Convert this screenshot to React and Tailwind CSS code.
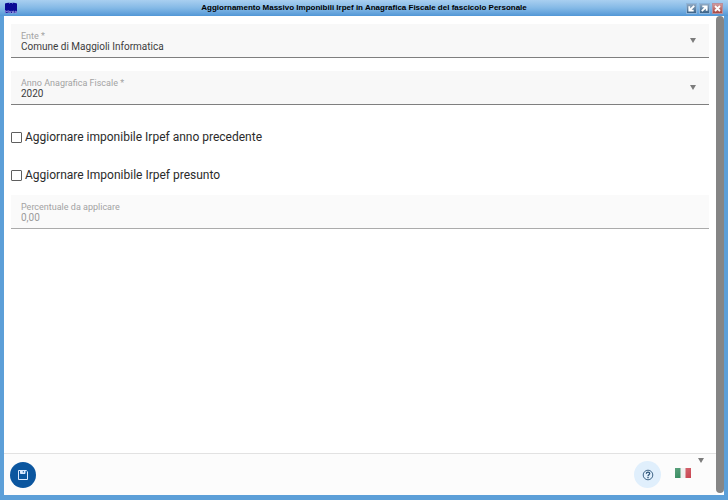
import React from "react";

function WindowButton({ label, close, children }) {
  return (
    <button
      type="button"
      aria-label={label}
      className={`flex h-[11px] w-[11px] items-center justify-center border ${
        close
          ? "border-[#b98f9c] bg-linear-to-b from-[#d09a9c] to-[#a84842]"
          : "border-[#8db4da] bg-linear-to-b from-[#8fa9c3] to-[#3c6488]"
      }`}
    >
      <svg viewBox="0 0 9 9" className="h-[9px] w-[9px]" fill="none" stroke="#fff" strokeWidth="1.8">
        {children}
      </svg>
    </button>
  );
}

function TitleBar() {
  return (
    <header className="flex h-4 items-center bg-linear-to-b from-[#a9cff0] via-[#84b9e6] to-[#5297d6] px-[5px]">
      <div className="flex flex-1">
        <svg viewBox="0 0 12 12" className="h-3 w-3" aria-hidden="true">
          <path d="M0 1.5Q3 .2 6 1Q9 .2 12 1.5V11H0z" fill="#0a0a94" />
          <path d="M4 1.5h1M7 1.5h1" stroke="#6a6ad8" strokeWidth=".7" />
          <path d="M.7 11V8.5l1.2 1.4 1.2-1.4V11M4.2 11V9.3h1.2V11M6.3 9.3h1.2v2H6.3M8.6 8.7V11M10 9.3h1.4V11H10z" fill="none" stroke="#a3a3e8" strokeWidth=".8" />
        </svg>
      </div>
      <h1 className="whitespace-nowrap font-['Liberation_Sans',Arial,sans-serif] text-[8px] font-bold leading-4 text-black">
        Aggiornamento Massivo Imponibili Irpef in Anagrafica Fiscale del fascicolo Personale
      </h1>
      <div className="flex flex-1 justify-end gap-[2px]">
        <WindowButton label="Riduci">
          <path d="M7.2 1.8 3 6M2.3 2.3v4.4h4.4" />
        </WindowButton>
        <WindowButton label="Ingrandisci">
          <path d="M1.8 7.2 6 3M2.3 2.3h4.4v4.4" />
        </WindowButton>
        <WindowButton label="Chiudi" close>
          <path d="m2 2 5 5m0-5L2 7" />
        </WindowButton>
      </div>
    </header>
  );
}

function Caret() {
  return (
    <svg viewBox="0 0 6 5" className="h-[5px] w-[6px] shrink-0" aria-hidden="true">
      <path d="M0 0h6L3 5z" fill="#7c7c7c" />
    </svg>
  );
}

function SelectField({ id, label, value }) {
  return (
    <div className="grid h-[34px] grid-cols-1 border-b border-[#7f7f7f] bg-[#f8f8f8]">
      <div className="col-start-1 row-start-1 flex flex-col px-[10px] pt-[7px]">
        <label htmlFor={id} className="text-[9px] leading-[10px] text-[#a3a3a3]">
          {label}
        </label>
        <select id={id} defaultValue={value} className="w-full appearance-none bg-transparent text-[10px] leading-3 text-[#3c3c3c] outline-none">
          <option>{value}</option>
        </select>
      </div>
      <div className="pointer-events-none col-start-1 row-start-1 flex items-center justify-end pr-[13px]">
        <Caret />
      </div>
    </div>
  );
}

function CheckRow({ label }) {
  return (
    <label className="flex h-[38px] items-center gap-[3px] text-[12px] leading-4 text-[#2b2b2b]">
      <input type="checkbox" className="h-[11px] w-[11px] shrink-0 appearance-none rounded-[1px] border border-[#5f5f5f] bg-white checked:bg-[#0b57a0]" />
      {label}
    </label>
  );
}

export default function App() {
  return (
    <div className="flex min-h-screen flex-col bg-[#5c9fd8] font-[Roboto,sans-serif]">
      <TitleBar />
      <div className="mr-1 mb-[5px] ml-1 flex flex-1 bg-white">
        <div className="flex min-w-0 flex-1 flex-col">
          <main className="flex flex-1 flex-col px-[7px] pt-2">
            <div className="flex flex-col gap-[13px]">
              <SelectField id="ente" label="Ente *" value="Comune di Maggioli Informatica" />
              <SelectField id="anno" label="Anno Anagrafica Fiscale *" value="2020" />
            </div>
            <div className="pt-[13px]">
              <CheckRow label="Aggiornare imponibile Irpef anno precedente" />
              <CheckRow label="Aggiornare Imponibile Irpef presunto" />
            </div>
            <div className="mt-px flex h-[34px] flex-col border-b border-[#ababab] bg-[#fafafa] px-[10px] pt-[7px]">
              <label htmlFor="percentuale" className="text-[9px] leading-[10px] text-[#a3a3a3]">
                Percentuale da applicare
              </label>
              <input id="percentuale" defaultValue="0,00" disabled className="w-full bg-transparent text-[10px] leading-3 text-[#9b9b9b] outline-none" />
            </div>
          </main>
          <footer className="flex h-[42px] items-center border-t border-[#e2e2e2] bg-[#fcfcfc] pr-3 pl-[6px]">
            <button type="button" aria-label="Salva" className="flex h-[26px] w-[26px] items-center justify-center rounded-full bg-[#0b569f]">
              <svg viewBox="0 0 12 12" className="h-3 w-3" fill="none" stroke="#dceaff">
                <path d="M1.5 1.5h7.8l1.2 1.2v7.8h-9z" />
                <path d="M3.5 1.5v3h4.5v-3z" fill="#dceaff" />
                <path d="M6.3 2v1.5" stroke="#0b569f" />
              </svg>
            </button>
            <button type="button" aria-label="Aiuto" className="ml-auto flex h-[27px] w-[27px] items-center justify-center rounded-full bg-[#e0effc]">
              <svg viewBox="0 0 12 12" className="h-3 w-3" fill="none" stroke="#2b5378">
                <circle cx="6" cy="6" r="4.8" strokeWidth=".9" />
                <path d="M4.3 4.8Q4.4 3.2 6 3.2Q7.7 3.2 7.7 4.6C7.7 5.7 6 5.8 6 7.2M6 8.1v1.2" strokeWidth="1.3" />
              </svg>
            </button>
            <button type="button" aria-label="Lingua: italiano" className="ml-[14px] flex h-full gap-[7px]">
              <svg viewBox="0 0 16 10" className="mt-[14px] h-[10px] w-4" aria-hidden="true">
                <defs>
                  <linearGradient id="flagShade" x1="0" y1="0" x2="1" y2="1">
                    <stop offset="0" stopColor="#fff" stopOpacity=".25" />
                    <stop offset="1" stopColor="#fff" stopOpacity="0" />
                  </linearGradient>
                </defs>
                <path d="M0 0h6v10H0z" fill="#258252" />
                <path d="M5.5 0h5.5v10H5.5z" fill="#eeeeee" />
                <path d="M10.5 0H16v10h-5.5z" fill="#c94450" />
                <path d="M0 0h16v10H0z" fill="url(#flagShade)" />
              </svg>
              <span className="mt-1">
                <Caret />
              </span>
            </button>
          </footer>
        </div>
        <div className="flex w-2 flex-col bg-white" aria-hidden="true">
          <div className="mb-[2px] flex-1 rounded-full bg-[#858585]" />
        </div>
      </div>
    </div>
  );
}
